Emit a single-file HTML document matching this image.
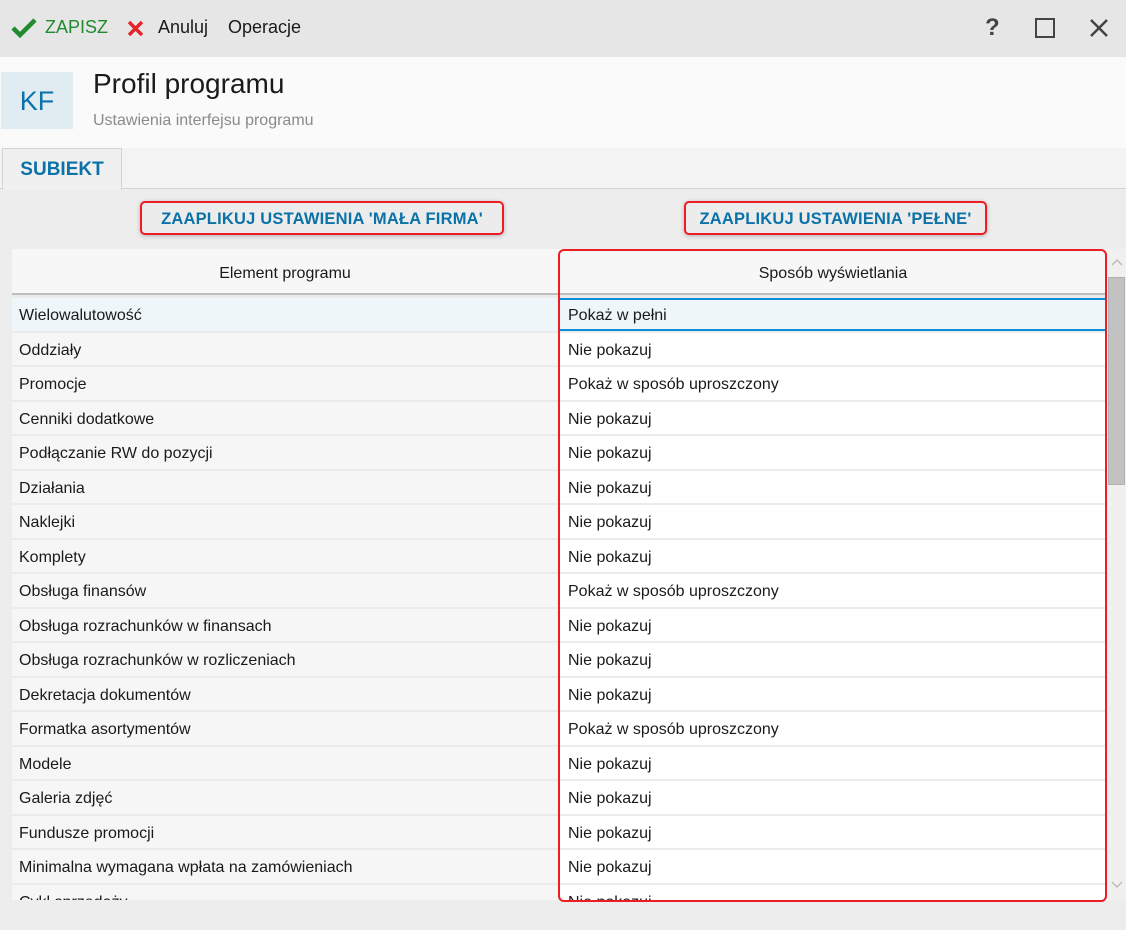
<!DOCTYPE html>
<html><head><meta charset="utf-8"><style>
*{margin:0;padding:0;box-sizing:border-box}
body{width:1126px;height:930px;overflow:hidden;background:#ededed;font-family:"Segoe UI","Liberation Sans","DejaVu Sans",sans-serif;color:#1a1a1a;position:relative}
.a{position:absolute}
.tb{left:0;top:0;width:1126px;height:57px;background:#e6e6e6}
.hd{left:0;top:57px;width:1126px;height:91px;background:#fafafa}
.tabs{left:0;top:148px;width:1126px;height:41px;background:#f3f3f3;border-bottom:1px solid #d4d4d4}
.tab{left:2px;top:148px;width:120px;height:42px;background:#f0f0f0;border:1px solid #d4d4d4;border-bottom:none;color:#0b72a8;font-weight:bold;font-size:19px;text-align:center;line-height:42px}
.btn{height:34px;border:2px solid #ee1c25;border-radius:5px;color:#0b72a8;font-weight:bold;font-size:16.5px;line-height:32px;text-align:center;box-shadow:0 1px 4px rgba(0,0,0,.25);background:#ececec;letter-spacing:.2px}
.row{position:absolute;left:12px;width:1094px;height:32.5px;font-size:16px;line-height:35px}
.l{position:absolute;left:0;width:546px;height:100%;background:#f6f6f6;padding-left:7px}
.r{position:absolute;left:548px;width:546px;height:100%;background:#fff;padding-left:8px}
</style></head><body>
<div class="a tb"></div>
<svg class="a" style="left:11px;top:18px" width="26" height="20" viewBox="0 0 26 20"><path d="M2 10 L9 17 L24 2" stroke="#1f8a2e" stroke-width="4.5" fill="none"/></svg>
<div class="a" style="left:45px;top:17px;font-size:18px;color:#1f8a2e;font-weight:500">ZAPISZ</div>
<svg class="a" style="left:127px;top:20px" width="17" height="17" viewBox="0 0 17 17"><path d="M2 2L15 15M15 2L2 15" stroke="#e3262d" stroke-width="3.5"/></svg>
<div class="a" style="left:158px;top:17px;font-size:18px">Anuluj</div>
<div class="a" style="left:228px;top:17px;font-size:18px">Operacje</div>
<div class="a" style="left:985px;top:14px;font-size:24px;color:#444;font-weight:bold">?</div>
<div class="a" style="left:1035px;top:18px;width:20px;height:20px;border:2.5px solid #444"></div>
<svg class="a" style="left:1089px;top:18px" width="20" height="20" viewBox="0 0 20 20"><path d="M2 2L18 18M18 2L2 18" stroke="#444" stroke-width="2.5"/></svg>
<div class="a hd"></div>
<div class="a" style="left:1px;top:72px;width:72px;height:57px;background:#e1ebf2;color:#0b72a8;font-size:27px;text-align:center;line-height:59px">KF</div>
<div class="a" style="left:93px;top:68px;font-size:28px">Profil programu</div>
<div class="a" style="left:93px;top:112px;font-size:16px;color:#8a8a8a">Ustawienia interfejsu programu</div>
<div class="a tabs"></div>
<div class="a tab">SUBIEKT</div>
<div class="a btn" style="left:140px;top:201px;width:364px">ZAAPLIKUJ USTAWIENIA 'MAŁA FIRMA'</div>
<div class="a btn" style="left:684px;top:201px;width:303px">ZAAPLIKUJ USTAWIENIA 'PEŁNE'</div>
<div class="a" style="left:12px;top:249px;width:1094px;height:651px;background:#ebebeb;overflow:hidden">
<div class="a" style="left:0;top:0;width:1094px;height:46px;background:#f7f7f7;border-bottom:2px solid #bdbdbd;font-size:16px;line-height:50px">
<div class="a" style="left:0;width:546px;text-align:center">Element programu</div>
<div class="a" style="left:548px;width:546px;text-align:center">Sposób wyświetlania</div>
</div>
</div>
<div id="rows"></div>
<div class="a" style="left:12px;top:900px;width:1094px;height:30px;background:#ededed"></div>
<div class="a" style="left:1107px;top:249px;width:19px;height:651px;background:#f0f0f0"></div>
<div class="a" style="left:1108px;top:277px;width:17px;height:208px;background:#c2c2c2;border:1px solid #b0b0b0"></div>
<svg class="a" style="left:1110px;top:257px" width="14" height="10"><path d="M2 8L7 3L12 8" stroke="#bbb" stroke-width="1.5" fill="none"/></svg>
<svg class="a" style="left:1110px;top:880px" width="14" height="10"><path d="M2 2L7 7L12 2" stroke="#bbb" stroke-width="1.5" fill="none"/></svg>
<div class="a" style="left:558px;top:249px;width:549px;height:653px;border:2px solid #ee1c25;border-radius:6px"></div>
<script>
var d=[["Wielowalutowość","Pokaż w pełni"],["Oddziały","Nie pokazuj"],["Promocje","Pokaż w sposób uproszczony"],["Cenniki dodatkowe","Nie pokazuj"],["Podłączanie RW do pozycji","Nie pokazuj"],["Działania","Nie pokazuj"],["Naklejki","Nie pokazuj"],["Komplety","Nie pokazuj"],["Obsługa finansów","Pokaż w sposób uproszczony"],["Obsługa rozrachunków w finansach","Nie pokazuj"],["Obsługa rozrachunków w rozliczeniach","Nie pokazuj"],["Dekretacja dokumentów","Nie pokazuj"],["Formatka asortymentów","Pokaż w sposób uproszczony"],["Modele","Nie pokazuj"],["Galeria zdjęć","Nie pokazuj"],["Fundusze promocji","Nie pokazuj"],["Minimalna wymagana wpłata na zamówieniach","Nie pokazuj"],["Cykl sprzedaży","Nie pokazuj"]];
var h="";for(var i=0;i<d.length;i++){var t=298+i*34.5;var sel=i==0;
h+='<div class="row" style="top:'+t+'px"><div class="l" style="'+(sel?'background:#eef6fa':'')+'">'+d[i][0]+'</div><div class="r" style="'+(sel?'background:#eef6fa;border-top:2px solid #0a8fd8;border-bottom:2px solid #0a8fd8;line-height:31px':'')+'">'+d[i][1]+'</div></div>';}
document.getElementById("rows").innerHTML=h;
</script>
</body></html>
